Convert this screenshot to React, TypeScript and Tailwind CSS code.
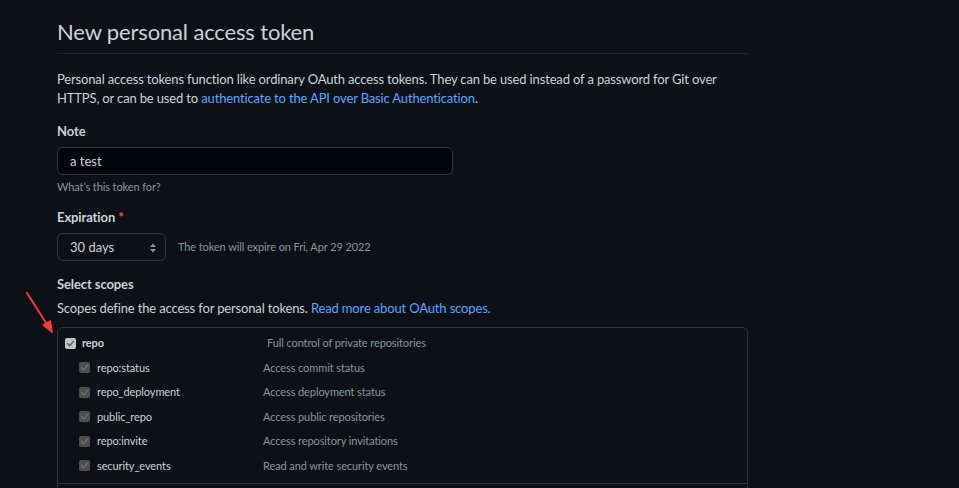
import type { ReactNode } from 'react';

type Scope = { name: string; description: string };

const REPO_CHILDREN: Scope[] = [
  { name: 'repo:status', description: 'Access commit status' },
  { name: 'repo_deployment', description: 'Access deployment status' },
  { name: 'public_repo', description: 'Access public repositories' },
  { name: 'repo:invite', description: 'Access repository invitations' },
  { name: 'security_events', description: 'Read and write security events' },
];

function CheckBox({ main = false }: { main?: boolean }) {
  // Parent box is the lighter grey, children are greyed out (disabled)
  return (
    <span
      className={`flex h-[11px] w-[11px] shrink-0 items-center justify-center rounded-[2px] ${
        main ? 'bg-[#c4c4c4]' : 'bg-[#4e4e4e]'
      }`}
    >
      <svg width="9" height="9" viewBox="0 0 9 9" fill="none">
        <path
          d="M1.5 4.6 3.6 6.7 7.6 2.2"
          stroke={main ? '#5c5c5c' : '#6e6e6e'}
          strokeWidth="1.4"
          strokeLinecap="round"
          strokeLinejoin="round"
        />
      </svg>
    </span>
  );
}

function Label({ children }: { children: ReactNode }) {
  return <div className="text-[13px] font-bold leading-5 tracking-[-0.1px] text-[#c9d1d9]">{children}</div>;
}

function RedArrow() {
  return (
    <svg className="pointer-events-none absolute left-0 top-0" width="80" height="360" viewBox="0 0 80 360" fill="none">
      <line x1="27" y1="293" x2="48" y2="326" stroke="#f43b3b" strokeWidth="2" strokeLinecap="round" />
      <path d="M53 334 L42 325 L51 320 Z" fill="#f43b3b" />
    </svg>
  );
}

export default function App() {
  return (
    <main className="relative min-h-screen bg-[#0d1117] text-[#c9d1d9] font-['Lato','Noto_Sans',sans-serif]">
      <RedArrow />
      <div className="ml-[57px] w-[691px]">
        <div className="border-b border-[#21262d] pb-[6px] pt-[17px]">
          <h2 className="text-[22px] font-normal leading-[30px] tracking-[-0.15px] text-[#c9d1d9]">
            New personal access token
          </h2>
        </div>

        <p className="mt-4 text-[13px] leading-[19px] tracking-[-0.15px]">
          Personal access tokens function like ordinary OAuth access tokens. They can be used instead of a password for Git over
          <br />
          HTTPS, or can be used to <a className="text-[#58a6ff]">authenticate to the API over Basic Authentication</a>.
        </p>

        <div className="mt-[13px]">
          <Label>Note</Label>
          <div className="mt-[6px] flex h-[28px] w-[396px] items-center rounded-md border border-[#30363d] bg-[#010409] px-3 pt-[1px] text-[13px]">
            a test
          </div>
          <div className="mt-[3px] text-[11px] leading-[18px] tracking-[-0.1px] text-[#8b949e]">What’s this token for?</div>
        </div>

        <div className="mt-[11px]">
          <Label>
            Expiration <span className="text-[#f85149]">*</span>
          </Label>
          <div className="mt-[6px] flex items-center gap-3">
            <div className="flex h-[28px] w-[109px] items-center justify-between rounded-md border border-[#30363d] pl-3 pr-[8px] pt-[1px] text-[13px]">
              <span>30 days</span>
              <svg width="8" height="12" viewBox="0 0 8 12" fill="#8b949e">
                <path d="M4 1.5 7 5H1Z" />
                <path d="M4 10.5 1 7h6Z" />
              </svg>
            </div>
            <span className="text-[11px] tracking-[-0.1px] text-[#8b949e]">The token will expire on Fri, Apr 29 2022</span>
          </div>
        </div>

        <div className="mt-[13px]">
          <Label>Select scopes</Label>
          <p className="mt-1 text-[13px] leading-5 tracking-[-0.15px]">
            Scopes define the access for personal tokens. <a className="text-[#58a6ff]">Read more about OAuth scopes.</a>
          </p>
        </div>

        <div className="mt-[9px] rounded-md border border-[#30363d] text-[11px] tracking-[-0.1px]">
          <div className="border-b border-[#30363d] pb-[5px] pt-[3px]">
            <div className="flex h-[24.5px] items-center pl-[7px]">
              <CheckBox main />
              <span className="ml-[6px] w-[185px] font-bold">repo</span>
              <span className="text-[#8b949e]">Full control of private repositories</span>
            </div>
            {REPO_CHILDREN.map((s) => (
              <div key={s.name} className="flex h-[24.5px] items-center pl-[21px]">
                <CheckBox />
                <span className="ml-[7px] w-[166px]">{s.name}</span>
                <span className="text-[#8b949e]">{s.description}</span>
              </div>
            ))}
          </div>
          {/* next scope group starts below the visible area */}
          <div className="h-[40px]" />
        </div>
      </div>
    </main>
  );
}
